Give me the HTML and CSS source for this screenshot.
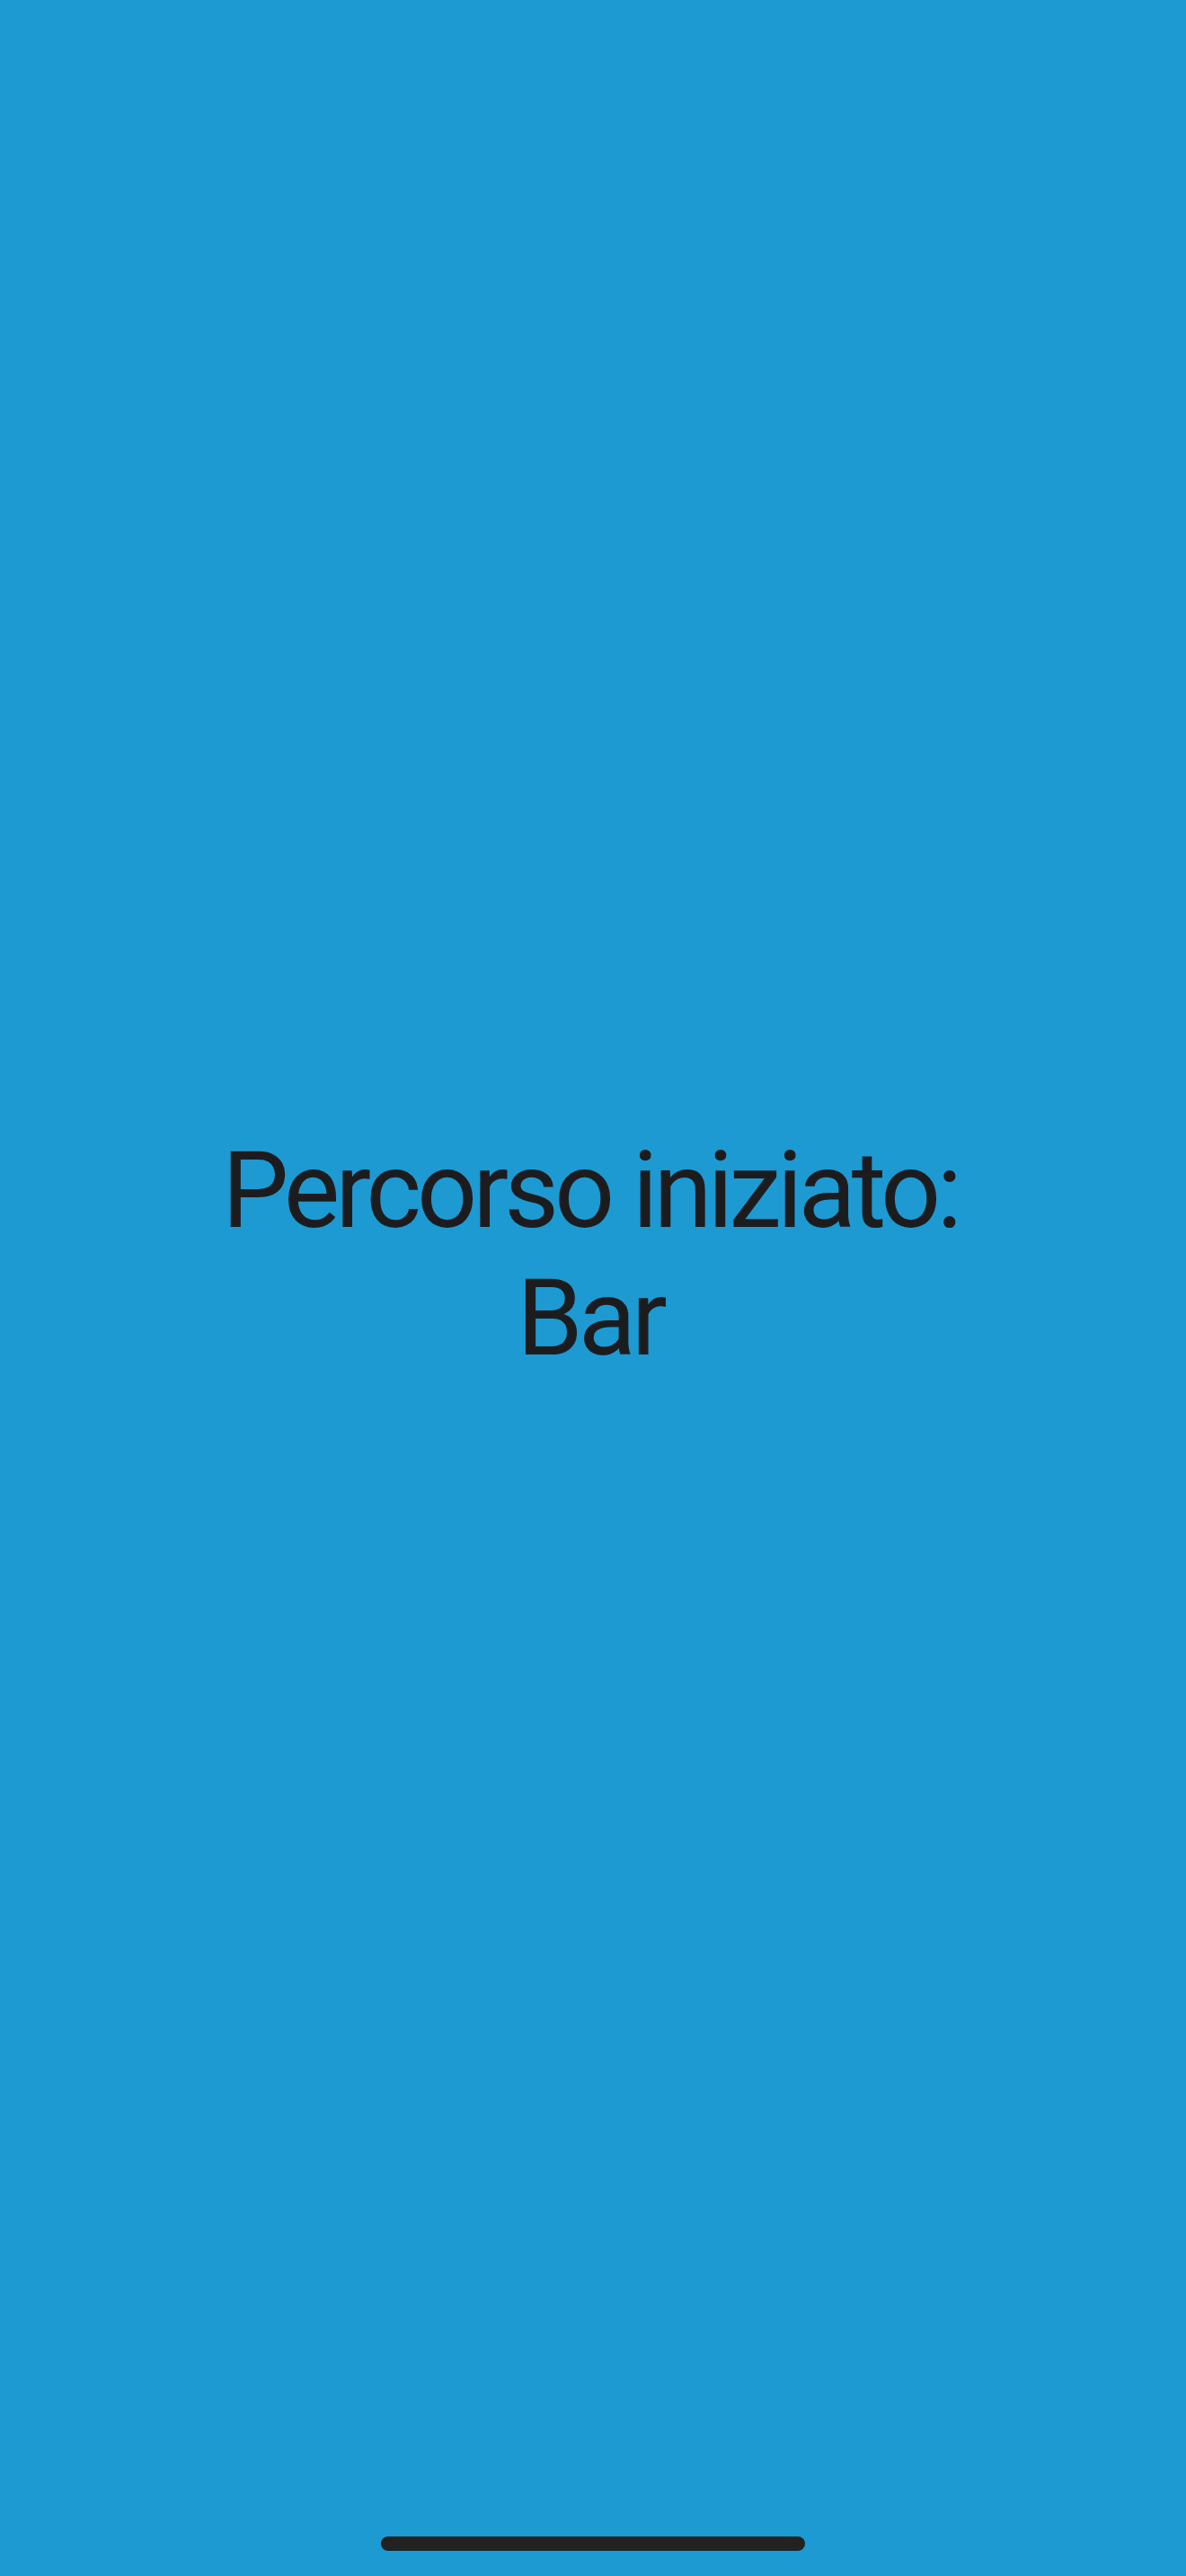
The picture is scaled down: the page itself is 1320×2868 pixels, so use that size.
FILE: index.html
```html
<!DOCTYPE html>
<html lang="it">
<head>
<meta charset="utf-8">
<title>Percorso iniziato</title>
<link rel="stylesheet" href="styles.css">
</head>
<body>
<div class="screen">
  <main class="content">
    <p class="message">Percorso iniziato:<br>Bar</p>
  </main>
  <div class="home-indicator"></div>
</div>
</body>
</html>
```

FILE: styles.css
```css
html, body {
  margin: 0;
  padding: 0;
}
body {
  background: #1d9ad2;
  font-family: Roboto, Inter, "Noto Sans", "Liberation Sans", sans-serif;
}
.screen {
  width: 1320px;
  height: 2868px;
  display: flex;
  flex-direction: column;
  align-items: center;
  background: #1d9ad2;
}
.content {
  flex: 1;
  width: 100%;
  display: flex;
  align-items: center;
  justify-content: center;
  padding-bottom: 30px;
  box-sizing: border-box;
}
.message {
  margin: 0;
  padding-right: 7px;
  text-align: center;
  color: #1c1c1f;
  font-size: 118px;
  line-height: 142px;
  font-weight: 400;
  letter-spacing: -5px;
}
.home-indicator {
  width: 472px;
  height: 16px;
  border-radius: 8px;
  background: #222222;
  margin-bottom: 28px;
}
```
